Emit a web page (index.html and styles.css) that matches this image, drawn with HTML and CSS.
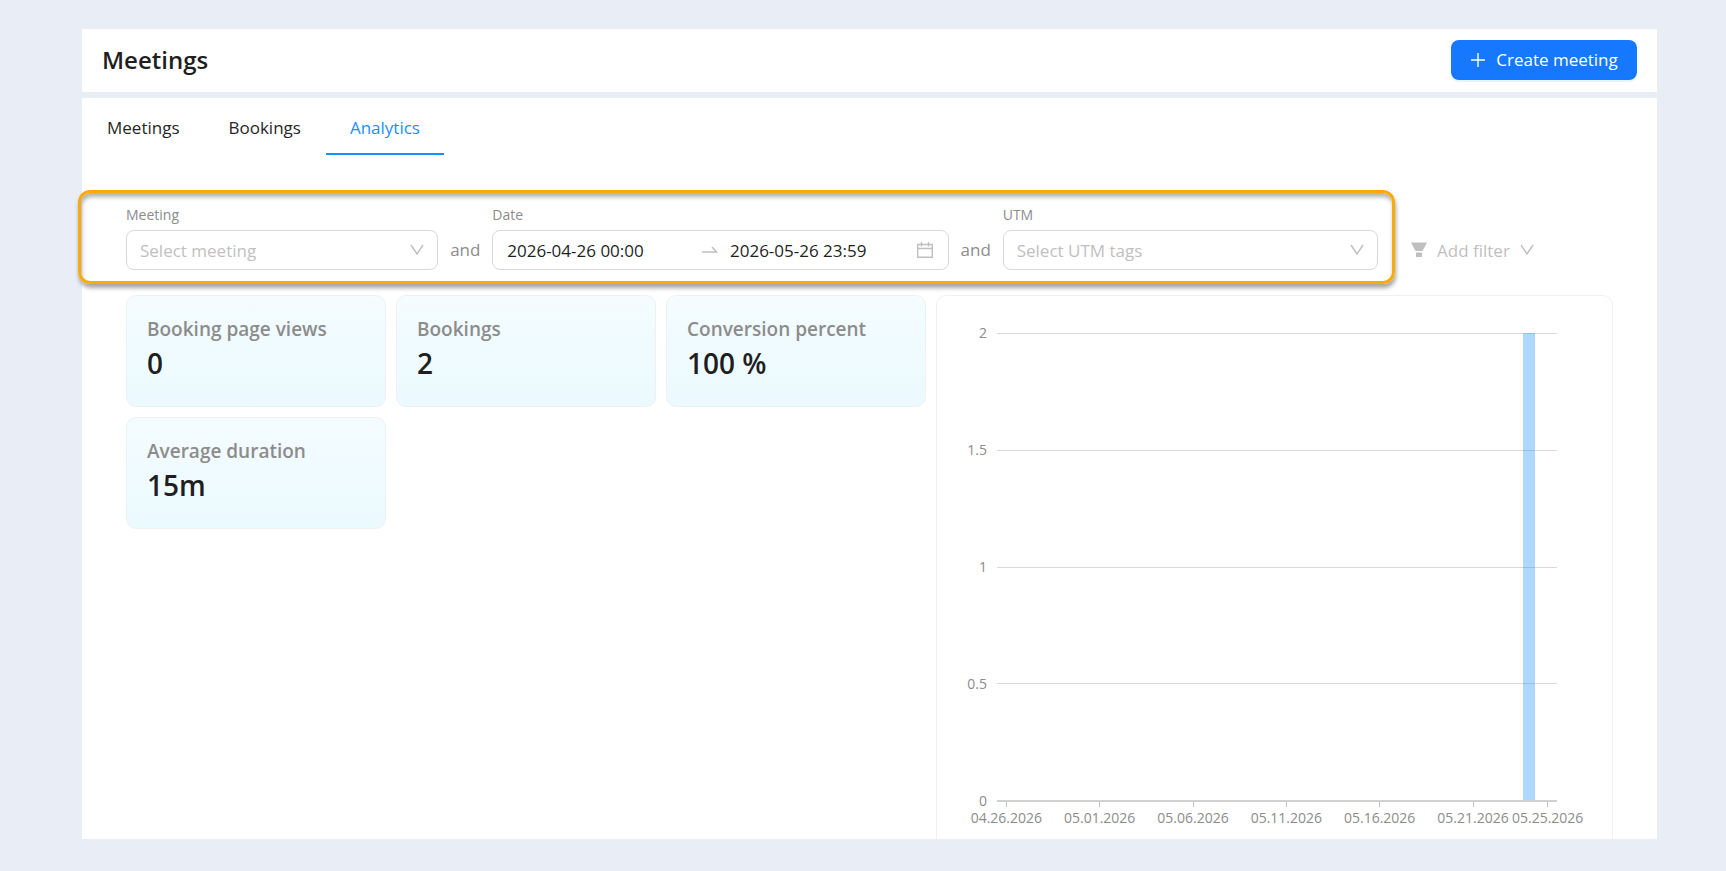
FILE: index.html
```html
<!DOCTYPE html>
<html lang="en">
<head>
  <meta charset="UTF-8" />
  <title>Meetings - Analytics</title>
  <meta name="viewport" content="width=device-width, initial-scale=1.0" />
  <link rel="stylesheet" href="styles.css">
</head>
<body>

  <header class="page-header">
    <h1>Meetings</h1>
    <button type="button" class="create-btn">
      <svg width="16" height="16" viewBox="0 0 16 16"><path d="M8 1v14M1 8h14" /></svg>
      Create meeting
    </button>
  </header>

  <main class="panel">
    <nav class="tabs">
      <a href="#meetings">Meetings</a>
      <a href="#bookings">Bookings</a>
      <a href="#analytics" class="active">Analytics</a>
    </nav>

    <form class="filters">
      <div class="filter-group">
        <div class="field field-meeting">
          <label for="meeting">Meeting</label>
          <div class="select-box">
            <select id="meeting"><option>Select meeting</option></select>
            <svg class="chevron" width="14" height="12" viewBox="0 0 14 12"><path d="M1 1l6 9 6-9" /></svg>
          </div>
        </div>

        <span class="and">and</span>

        <div class="field field-date">
          <label for="date-from">Date</label>
          <div class="range-box">
            <input type="text" id="date-from" value="2026-04-26 00:00" />
            <svg class="arrow" width="16" height="8" viewBox="0 0 16 8"><path d="M0 6h14.500l-4.500-5" /></svg>
            <input type="text" id="date-to" aria-label="Date to" value="2026-05-26 23:59" />
            <svg class="calendar" width="16" height="16" viewBox="0 0 16 16"><path d="M.7 2.500h14.600v12.800H.7zM.7 6.500h14.600M4.500 0v4.500M11.500 0v4.500" /></svg>
          </div>
        </div>

        <span class="and">and</span>

        <div class="field field-utm">
          <label for="utm">UTM</label>
          <div class="select-box">
            <select id="utm"><option>Select UTM tags</option></select>
            <svg class="chevron" width="14" height="12" viewBox="0 0 14 12"><path d="M1 1l6 9 6-9" /></svg>
          </div>
        </div>
      </div>

      <button type="button" class="add-filter">
        <svg class="funnel" width="16" height="16" viewBox="0 0 16 16"><path d="M0 .5h16l-4.500 8.500h-7zM5 10.500h6v4.500H5z" /></svg>
        Add filter
        <svg class="chevron" width="14" height="12" viewBox="0 0 14 12"><path d="M1 1l6 9 6-9" /></svg>
      </button>
    </form>

    <section class="dashboard">
      <div class="stats">
        <div class="stat">
          <h2>Booking page views</h2>
          <p>0</p>
        </div>
        <div class="stat">
          <h2>Bookings</h2>
          <p>2</p>
        </div>
        <div class="stat">
          <h2>Conversion percent</h2>
          <p>100 %</p>
        </div>
        <div class="stat">
          <h2>Average duration</h2>
          <p>15m</p>
        </div>
      </div>

      <div class="chart-card">
        <div class="chart">
          <div class="y-axis">
            <span>2</span>
            <span>1.5</span>
            <span>1</span>
            <span>0.5</span>
            <span>0</span>
          </div>
          <div class="plot">
            <div class="grid-lines"><i></i><i></i><i></i><i></i></div>
            <div class="bars"><div class="bar day-29"></div></div>
          </div>
          <div class="x-axis">
            <span class="day-1">04.26.2026</span>
            <span class="day-6">05.01.2026</span>
            <span class="day-11">05.06.2026</span>
            <span class="day-16">05.11.2026</span>
            <span class="day-21">05.16.2026</span>
            <span class="day-26">05.21.2026</span>
            <span class="day-30">05.25.2026</span>
          </div>
        </div>
      </div>
    </section>
  </main>

</body>
</html>
```
FILE: styles.css
```css
* {
  box-sizing: border-box;
}

body {
  display: flex;
  flex-direction: column;
  gap: 6px;
  height: 100vh;
  margin: 0;
  padding: 29px 69px 32px 82px;
  background: #e9eef6;
  color: #1f1f1f;
  font-family: "Open Sans", "Noto Sans", sans-serif;
  font-size: 17px;
}

button, input, select {
  font: inherit;
}

svg {
  fill: none;
  flex: none;
}

/* header */
.page-header {
  display: flex;
  justify-content: space-between;
  align-items: center;
  height: 63px;
  padding: 0 20px 2px;
  background: #fff;
}

h1 {
  margin: 0;
  font-size: 24px;
  font-weight: 600;
}

.create-btn {
  display: flex;
  align-items: center;
  justify-content: center;
  gap: 10px;
  width: 186px;
  height: 40px;
  padding: 0;
  background: #1677ff;
  border: none;
  border-radius: 8px;
  box-shadow: 0 2px 0 rgba(5, 145, 255, 0.1);
  color: #fff;
  cursor: pointer;
}

.create-btn svg {
  stroke: #fff;
  stroke-width: 1.4;
}

/* tabs */
.panel {
  display: flex;
  flex-direction: column;
  flex: 1;
  min-height: 0;
  background: #fff;
}

.tabs {
  display: flex;
  gap: 1px;
  height: 57px;
  padding-left: 1px;
}

.tabs a {
  padding: 0 24px;
  border-bottom: 2px solid transparent;
  color: #262626;
  line-height: 60px;
  text-decoration: none;
}

.tabs a.active {
  border-color: #1890ff;
  color: #1890ff;
}

/* filters */
.filters {
  display: flex;
  align-items: flex-end;
  gap: 33px;
  margin: 49px 44px 0;
}

.filter-group {
  position: relative;
  display: flex;
  align-items: flex-end;
  flex: 0 1 1252px;
}

.filter-group::after {
  content: "";
  position: absolute;
  inset: -14px -17px -14px -48px;
  border: 3px solid #faab0c;
  border-radius: 12px;
  box-shadow: 1px 4px 4px rgba(0, 0, 0, 0.35), inset 1px 4px 4px rgba(0, 0, 0, 0.3);
  pointer-events: none;
}

.field {
  min-width: 0;
}

.field label {
  display: block;
  margin-bottom: 4px;
  color: #8c8c8c;
  font-size: 14px;
  line-height: 22px;
}

.field-meeting { flex: 312; }
.field-date { flex: 456; }
.field-utm { flex: 375; }

.select-box {
  position: relative;
}

.select-box select {
  display: block;
  width: 100%;
  height: 40px;
  padding: 0 13px;
  appearance: none;
  background: #fff;
  border: 1px solid #d9d9d9;
  border-radius: 8px;
  color: #bfbfbf;
}

.select-box .chevron {
  position: absolute;
  top: 14px;
  right: 14px;
  pointer-events: none;
}

.chevron, .arrow, .calendar {
  stroke: #bfbfbf;
  stroke-width: 1.4;
}

.and {
  width: 54px;
  color: #8c8c8c;
  line-height: 40px;
  text-align: center;
}

.range-box {
  display: flex;
  align-items: center;
  height: 40px;
  padding: 0 15px 0 14px;
  border: 1px solid #d9d9d9;
  border-radius: 8px;
}

.range-box input {
  flex: 1;
  min-width: 0;
  padding: 0;
  background: none;
  border: none;
  color: #1f1f1f;
}

.range-box .arrow {
  margin: 0 12px 0 8px;
}

.add-filter {
  display: flex;
  align-items: center;
  gap: 10px;
  height: 40px;
  padding: 0;
  background: none;
  border: none;
  color: #bfbfbf;
  cursor: pointer;
}

.funnel {
  fill: #bfbfbf;
}

/* dashboard */
.dashboard {
  display: grid;
  grid-template-columns: minmax(0, 13fr) minmax(0, 11fr);
  align-items: start;
  gap: 10px;
  flex: 1;
  min-height: 0;
  margin: 25px 44px 0;
  overflow: hidden;
}

.stats {
  display: grid;
  grid-template-columns: repeat(3, 1fr);
  gap: 10px;
}

.stat {
  height: 112px;
  padding: 19px 20px;
  background: linear-gradient(#f4fcff, #ebfaff);
  border: 1px solid #f0f0f0;
  border-radius: 10px;
}

.stat h2 {
  margin: 0;
  color: #8c8c8c;
  font-size: 19px;
  font-weight: 600;
  line-height: 28px;
  white-space: nowrap;
}

.stat p {
  margin: 0;
  font-size: 28px;
  font-weight: 600;
  line-height: 40px;
}

.chart-card {
  height: 600px;
  padding: 37px 55px 0 24px;
  border: 1px solid #f0f0f0;
  border-radius: 10px;
}

.chart {
  display: grid;
  grid-template-columns: 26px 1fr;
  column-gap: 10px;
  color: #8c8c8c;
  font-size: 14px;
}

.y-axis {
  display: flex;
  flex-direction: column;
  justify-content: space-between;
  margin: -10px 0 -9px;
  line-height: 20px;
  text-align: right;
}

.plot {
  display: grid;
  height: 469px;
  border-bottom: 2px solid #d0d0d0;
}

.grid-lines, .bars {
  grid-area: 1 / 1;
}

.grid-lines {
  display: grid;
  grid-template-rows: repeat(4, 1fr);
}

.grid-lines i {
  border-top: 1px solid #d9d9d9;
}

/* one column per day */
.bars, .x-axis {
  display: grid;
  grid-template-columns: repeat(30, minmax(0, 1fr));
}

.bar {
  width: 60%;
  margin: 0 auto;
  background: rgba(24, 144, 255, 0.35);
}

.x-axis {
  grid-column: 2;
  justify-items: center;
}

.x-axis span {
  line-height: 22px;
  white-space: nowrap;
}

.x-axis span::before {
  content: "";
  display: block;
  width: 1px;
  height: 5px;
  margin: 0 auto;
  background: #bfbfbf;
}

.day-1 { grid-area: 1 / 1; }
.day-6 { grid-area: 1 / 6; }
.day-11 { grid-area: 1 / 11; }
.day-16 { grid-area: 1 / 16; }
.day-21 { grid-area: 1 / 21; }
.day-26 { grid-area: 1 / 26; }
.day-29 { grid-area: 1 / 29; }
.day-30 { grid-area: 1 / 30; }
```
